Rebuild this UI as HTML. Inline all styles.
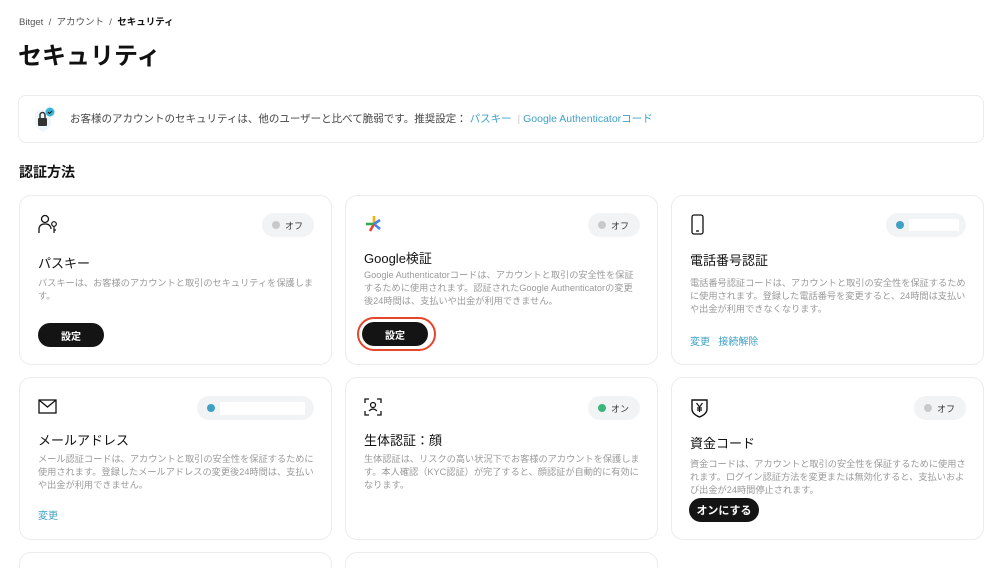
<!DOCTYPE html>
<html><head><meta charset="utf-8"><style>
*{margin:0;padding:0;box-sizing:border-box}
html,body{width:1000px;height:568px;overflow:hidden}
body{background:#fff;font-family:"Liberation Sans","Noto Sans CJK JP",sans-serif;color:#111;position:relative}
.a{position:absolute}
.card{position:absolute;border:1px solid #ececec;border-radius:12px;background:#fff}
.t{position:absolute;left:18px;font-size:13px;line-height:16px;color:#111}
.d{position:absolute;left:18px;right:17px;font-size:9.2px;line-height:13px;color:#9a9a9a}
.pill{position:absolute;height:24px;border-radius:12px;background:#f2f3f5;font-size:9px;color:#333;display:flex;align-items:center;padding-left:10px}
.dot{width:8px;height:8px;border-radius:50%;margin-right:5px}
.btn{position:absolute;background:#141414;color:#fff;font-size:10px;font-weight:bold;border-radius:12px;height:24px;display:flex;align-items:center;justify-content:center}
.lnk{position:absolute;font-size:10px;color:#3fa0c6}
.ic{position:absolute;left:18px;top:18px}
</style></head><body>
<div class="a" style="left:19px;top:14px;font-size:9.5px;color:#555">Bitget &nbsp;/&nbsp; アカウント &nbsp;/&nbsp; <span style="color:#111;font-weight:bold">セキュリティ</span></div>
<div class="a" style="left:18px;top:42px;font-size:24px;font-weight:bold;line-height:30px">セキュリティ</div>
<div class="card" style="left:18px;top:95px;width:966px;height:48px;border-radius:8px">
 <svg class="a" style="left:12px;top:10px" width="26" height="28" viewBox="0 0 26 28"><path d="M4 6 L13 3 L20 6 V16 Q20 22 12 26 Q4 22 4 16Z" fill="#eef6fa"/><rect x="7" y="12" width="9" height="8" rx="1" fill="#333"/><path d="M9 12V9a2.5 2.5 0 015 0v3" stroke="#333" stroke-width="1.5" fill="none"/><circle cx="19" cy="6" r="4.5" fill="#3cb4d8"/><path d="M17 6l1.5 1.5L21 5" stroke="#111" stroke-width="1" fill="none"/></svg>
 <div class="a" style="left:51px;top:15px;font-size:10.5px;color:#444">お客様のアカウントのセキュリティは、他のユーザーと比べて脆弱です。推奨設定： <span style="color:#3fa0c6">パスキー</span> <span style="color:#ccc">&nbsp;|&nbsp;</span><span style="color:#3fa0c6">Google Authenticatorコード</span></div>
</div>
<div class="a" style="left:19px;top:162px;font-size:14px;font-weight:bold">認証方法</div>

<div class="card" style="left:19px;top:195px;width:313px;height:170px">
 <svg class="ic" width="24" height="22" viewBox="0 0 24 22"><circle cx="7" cy="5" r="3.5" fill="none" stroke="#111" stroke-width="1.3"/><path d="M1 19V15a5 5 0 015-5h2a5 5 0 015 5" fill="none" stroke="#111" stroke-width="1.3"/><circle cx="16" cy="10" r="2.3" fill="none" stroke="#111" stroke-width="1.2"/><path d="M16 12.5V19M16 16h2" stroke="#111" stroke-width="1.2"/></svg>
 <div class="pill" style="left:242px;top:17px;width:52px"><span class="dot" style="background:#c9c9c9"></span>オフ</div>
 <div class="t" style="top:60px">パスキー</div>
 <div class="d" style="top:81px">パスキーは、お客様のアカウントと取引のセキュリティを保護します。</div>
 <div class="btn" style="left:18px;top:127px;width:66px">設定</div>
</div>
<div class="card" style="left:345px;top:195px;width:313px;height:170px">
 <svg class="ic" width="20" height="20" viewBox="0 0 20 20"><path d="M10 2v8" stroke="#f4b400" stroke-width="2.6"/><path d="M10 10l6 -4" stroke="#4285f4" stroke-width="2.6"/><path d="M10 10l6 5" stroke="#4285f4" stroke-width="2.6"/><path d="M10 10l-4 7" stroke="#ea4335" stroke-width="2.6"/><path d="M10 10H2" stroke="#34a853" stroke-width="2.6"/></svg>
 <div class="pill" style="left:242px;top:17px;width:52px"><span class="dot" style="background:#c9c9c9"></span>オフ</div>
 <div class="t" style="top:55px">Google検証</div>
 <div class="d" style="top:73px">Google Authenticatorコードは、アカウントと取引の安全性を保証するために使用されます。認証されたGoogle Authenticatorの変更後24時間は、支払いや出金が利用できません。</div>
 <div class="a" style="left:11px;top:121px;width:79px;height:34px;border:2.5px solid #e5452b;border-radius:17px"></div>
 <div class="btn" style="left:16px;top:126px;width:66px">設定</div>
</div>
<div class="card" style="left:671px;top:195px;width:313px;height:170px">
 <svg class="ic" width="16" height="22" viewBox="0 0 16 22"><rect x="2" y="1" width="11" height="19" rx="2" fill="none" stroke="#111" stroke-width="1.3"/><path d="M6 17h3" stroke="#111" stroke-width="1.3"/></svg>
 <div class="pill" style="left:214px;top:17px;width:80px"><span class="dot" style="background:#3fa0c6"></span><span style="background:#fff;width:50px;height:12px"></span></div>
 <div class="t" style="top:57px">電話番号認証</div>
 <div class="d" style="top:81px">電話番号認証コードは、アカウントと取引の安全性を保証するために使用されます。登録した電話番号を変更すると、24時間は支払いや出金が利用できなくなります。</div>
 <div class="lnk" style="left:18px;top:137px">変更 &nbsp;&nbsp;接続解除</div>
</div>

<div class="card" style="left:19px;top:377px;width:313px;height:163px">
 <svg class="ic" style="top:21px" width="20" height="16" viewBox="0 0 20 16"><rect x="1" y="1" width="17" height="13" fill="none" stroke="#111" stroke-width="1.3"/><path d="M1 1l8.5 7L18 1" fill="none" stroke="#111" stroke-width="1.3"/></svg>
 <div class="pill" style="left:177px;top:18px;width:117px"><span class="dot" style="background:#3fa0c6"></span><span style="background:#fff;width:85px;height:13px"></span></div>
 <div class="t" style="top:55px">メールアドレス</div>
 <div class="d" style="top:75px">メール認証コードは、アカウントと取引の安全性を保証するために使用されます。登録したメールアドレスの変更後24時間は、支払いや出金が利用できません。</div>
 <div class="lnk" style="left:18px;top:129px">変更</div>
</div>
<div class="card" style="left:345px;top:377px;width:313px;height:163px">
 <svg class="ic" style="top:20px" width="18" height="18" viewBox="0 0 18 18"><path d="M1 5V1h4M13 1h4v4M17 13v4h-4M5 17H1v-4" fill="none" stroke="#111" stroke-width="1.3"/><circle cx="9" cy="7" r="2.5" fill="none" stroke="#111" stroke-width="1.2"/><path d="M5 13q4-4 8 0" fill="none" stroke="#111" stroke-width="1.2"/></svg>
 <div class="pill" style="left:242px;top:18px;width:52px"><span class="dot" style="background:#3bb57a"></span>オン</div>
 <div class="t" style="top:55px">生体認証：顔</div>
 <div class="d" style="top:75px">生体認証は、リスクの高い状況下でお客様のアカウントを保護します。本人確認（KYC認証）が完了すると、顔認証が自動的に有効になります。</div>
</div>
<div class="card" style="left:671px;top:377px;width:313px;height:163px">
 <svg class="ic" style="top:20px" width="20" height="20" viewBox="0 0 20 20"><path d="M2 2h15v9q0 5-7.5 8Q2 16 2 11Z" fill="none" stroke="#111" stroke-width="1.4"/><path d="M6.5 5l3 4 3-4M9.5 9v5M7 10h5M7 12h5" fill="none" stroke="#111" stroke-width="1.2"/></svg>
 <div class="pill" style="left:242px;top:18px;width:52px"><span class="dot" style="background:#c9c9c9"></span>オフ</div>
 <div class="t" style="top:58px">資金コード</div>
 <div class="d" style="top:80px">資金コードは、アカウントと取引の安全性を保証するために使用されます。ログイン認証方法を変更または無効化すると、支払いおよび出金が24時間停止されます。</div>
 <div class="btn" style="left:17px;top:120px;width:70px;font-size:11px">オンにする</div>
</div>

<div class="card" style="left:19px;top:552px;width:313px;height:40px"></div>
<div class="card" style="left:345px;top:552px;width:313px;height:40px"></div>
</body></html>
